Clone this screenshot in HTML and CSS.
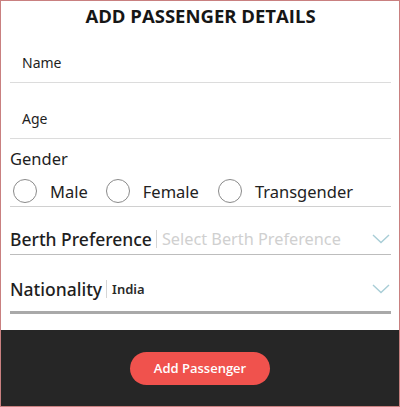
FILE: index.html
```html
<!DOCTYPE html>
<html lang="en">
<head>
  <meta charset="UTF-8">
  <meta name="viewport" content="width=device-width, initial-scale=1.0">
  <title>Add Passenger Details</title>
  <link rel="stylesheet" href="styles.css">
</head>
<body>
  <div class="page">
    <div class="form">
      <h1>ADD PASSENGER DETAILS</h1>

      <div class="field text-field"><span>Name</span></div>
      <div class="field text-field age"><span>Age</span></div>

      <div class="gender">
        <div class="label">Gender</div>
        <div class="radios">
          <label class="radio"><span class="circle"></span>Male</label>
          <label class="radio"><span class="circle"></span>Female</label>
          <label class="radio"><span class="circle"></span>Transgender</label>
        </div>
      </div>

      <div class="field select berth">
        <span class="label">Berth Preference</span>
        <span class="sep"></span>
        <span class="placeholder">Select Berth Preference</span>
        <svg class="chev" width="18" height="10" viewBox="0 0 18 10"><path d="M1 1 L9 8.5 L17 1" fill="none" stroke="#a8cdd6" stroke-width="1.4"/></svg>
      </div>

      <div class="field select nationality">
        <span class="label">Nationality</span>
        <span class="sep"></span>
        <span class="value">India</span>
        <svg class="chev" width="18" height="10" viewBox="0 0 18 10"><path d="M1 1 L9 8.5 L17 1" fill="none" stroke="#a8cdd6" stroke-width="1.4"/></svg>
      </div>
    </div>

    <div class="footer">
      <button class="add-btn">Add Passenger</button>
    </div>
  </div>
</body>
</html>
```

FILE: styles.css
```css
* { box-sizing: border-box; }
body {
  margin: 0;
  font-family: 'Noto Sans', 'Open Sans', sans-serif;
  color: #1e1e1e;
  background: #fff;
}
.page {
  width: 400px;
  height: 407px;
  border: 1px solid #c98080;
  display: flex;
  flex-direction: column;
}
.form {
  flex: 1;
  padding: 0 8px 0 9px;
  background: #fff;
}
h1 {
  margin: 0;
  height: 32px;
  line-height: 30px;
  text-align: center;
  font-family: 'Open Sans', sans-serif;
  font-size: 18.5px;
  font-weight: 700;
  color: #161616;
}
.field {
  display: flex;
  align-items: center;
}
.text-field {
  height: 50px;
  align-items: flex-end;
  padding: 0 0 10px 12px;
  border-bottom: 1px solid #dcdcdc;
  font-size: 14px;
}
.text-field.age { height: 56px; }
.gender {
  border-bottom: 1px solid #d0d0d0;
  padding-top: 9px;
  height: 68px;
}
.gender .label {
  font-size: 16.5px;
  line-height: 22px;
}
.radios {
  display: flex;
  align-items: center;
  margin-top: 9px;
}
.radio {
  display: flex;
  align-items: center;
  font-size: 16.5px;
  color: #222;
  margin-right: 18px;
}
.circle {
  width: 24px;
  height: 24px;
  border: 1.5px solid #8a8a8a;
  border-radius: 50%;
  margin: 0 13px 0 3px;
}
.radio:nth-child(2) .circle, .radio:nth-child(3) .circle { margin-left: 0; }
.radio:nth-child(2) { margin-right: 19px; }
.select {
  height: 48px;
  padding-top: 16px;
  align-items: center;
  border-bottom: 1px solid #bdbdbd;
}
.select .label {
  font-size: 17.5px;
  font-weight: 500;
  white-space: nowrap;
}
.sep {
  width: 1px;
  height: 18px;
  background: #d6d6d6;
  margin: 0 5px 0 4px;
}
.placeholder {
  flex: 1;
  font-size: 16.3px;
  color: #d0d0d0;
  white-space: nowrap;
}
.value {
  flex: 1;
  font-size: 13px;
  font-weight: 600;
  color: #2a2a2a;
}
.chev { margin-right: 1px; }
.nationality {
  height: 59px;
  padding-top: 12px;
  border-bottom: 3px solid #a9a9a9;
}
.footer {
  height: 76px;
  background: #262626;
  display: flex;
  justify-content: center;
  align-items: center;
}
.add-btn {
  width: 140px;
  height: 33px;
  border: none;
  border-radius: 17px;
  background: #f0524d;
  color: #fff;
  font-family: 'Open Sans', sans-serif;
  font-size: 13px;
  font-weight: 600;
}
```
